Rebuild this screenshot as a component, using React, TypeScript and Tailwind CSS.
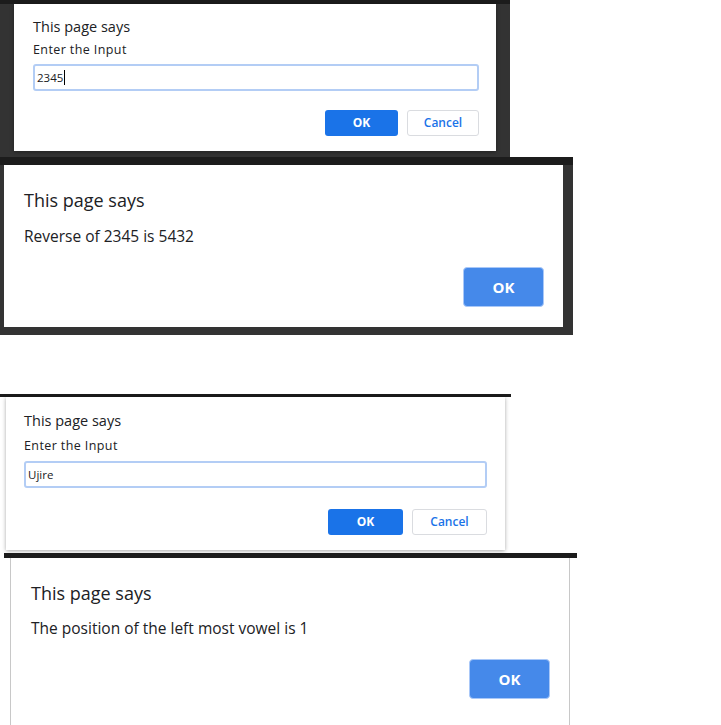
const font = { fontFamily: '"Open Sans", "Noto Sans", Arial, sans-serif' };

function PromptDialog({ value, caret, loose }: { value: string; caret?: boolean; loose?: boolean }) {
  return (
    <div
      className={
        loose
          ? "flex h-full flex-col bg-white pl-[18px] pr-[18px] pt-[15px] shadow-[0_1px_4px_rgba(0,0,0,0.35)]"
          : "flex h-full flex-col bg-white pl-[19px] pr-[17px] pt-[14px] shadow-[0_1px_4px_rgba(0,0,0,0.35)]"
      }
    >
      <div className="text-[14.5px] leading-[18px] text-[#202124]">This page says</div>
      <div
        className={
          loose
            ? "mt-[8px] text-[12.5px] leading-[16px] tracking-[0.4px] text-[#202124]"
            : "mt-[6px] text-[12.5px] leading-[16px] tracking-[0.4px] text-[#202124]"
        }
      >
        Enter the Input
      </div>
      <div
        className={
          loose
            ? "mt-[7px] flex h-[27px] items-center rounded-[3px] border-2 border-[#b3cdf5] px-[2px] text-[11.5px] text-[#202124]"
            : "mt-[6px] flex h-[27px] items-center rounded-[3px] border-2 border-[#b3cdf5] px-[2px] text-[11.5px] text-[#202124]"
        }
      >
        {value}
        {caret && <span className="ml-[1px] inline-block h-[15px] w-px bg-black" />}
      </div>
      <div className={loose ? "mt-[21px] flex justify-end gap-[9px]" : "mt-[19px] flex justify-end gap-[9px]"}>
        <button
          className={
            loose
              ? "h-[26px] w-[75px] rounded-[3px] bg-[#1a73e8] text-[12px] font-bold text-white"
              : "h-[26px] w-[73px] rounded-[3px] bg-[#1a73e8] text-[12px] font-bold text-white"
          }
        >
          OK
        </button>
        <button
          className={
            loose
              ? "h-[26px] w-[75px] rounded-[3px] border border-[#dadce0] bg-white text-[12px] font-semibold text-[#1a73e8]"
              : "h-[26px] w-[72px] rounded-[3px] border border-[#dadce0] bg-white text-[12px] font-semibold text-[#1a73e8]"
          }
        >
          Cancel
        </button>
      </div>
    </div>
  );
}

function AlertDialog({ message, top, gap }: { message: string; top: string; gap: string }) {
  return (
    <div className={`flex h-full flex-col bg-white pl-[20px] pr-[19px] ${top}`}>
      <div className="text-[18px] leading-[28px] text-[#202124]">This page says</div>
      <div className={`${gap} text-[15.5px] leading-[24px] text-[#202124]`}>{message}</div>
      <div className="mt-[19px] flex justify-end">
        <button className="h-[40px] w-[81px] rounded-[4px] border border-[#a9c8f8] bg-[#4589ea] text-[15px] font-bold text-white">
          OK
        </button>
      </div>
    </div>
  );
}

export default function App() {
  return (
    <div className="min-h-[725px] w-[721px] bg-white" style={font}>
      {/* prompt 1 */}
      <div className="h-[157px] w-[510px] border-t-4 border-[#1c1c1c] bg-[#333333] pl-[14px]">
        <div className="h-[147px] w-[482px]">
          <PromptDialog value="2345" caret />
        </div>
      </div>

      {/* alert 1 */}
      <div className="h-[178px] w-[573px] border-t-8 border-[#1c1c1c] bg-[#333333] pl-[4px]">
        <div className="h-[162px] w-[559px]">
          <AlertDialog message="Reverse of 2345 is 5432" top="pt-[21px]" gap="mt-[10px]" />
        </div>
      </div>

      {/* prompt 2 */}
      <div className="mt-[59px] w-[511px] border-t-[3px] border-[#1c1c1c] pl-[6px]">
        <div className="h-[153px] w-[499px]">
          <PromptDialog value="Ujire" loose />
        </div>
      </div>

      {/* alert 2 */}
      <div className="ml-[4px] mt-[3px] w-[573px] border-t-[5px] border-[#1c1c1c] pl-[6px]">
        <div className="h-[167px] w-[560px] border-x border-[#c8c8c8]">
          <AlertDialog message="The position of the left most vowel is 1" top="pt-[21px]" gap="mt-[9px]" />
        </div>
      </div>
    </div>
  );
}
